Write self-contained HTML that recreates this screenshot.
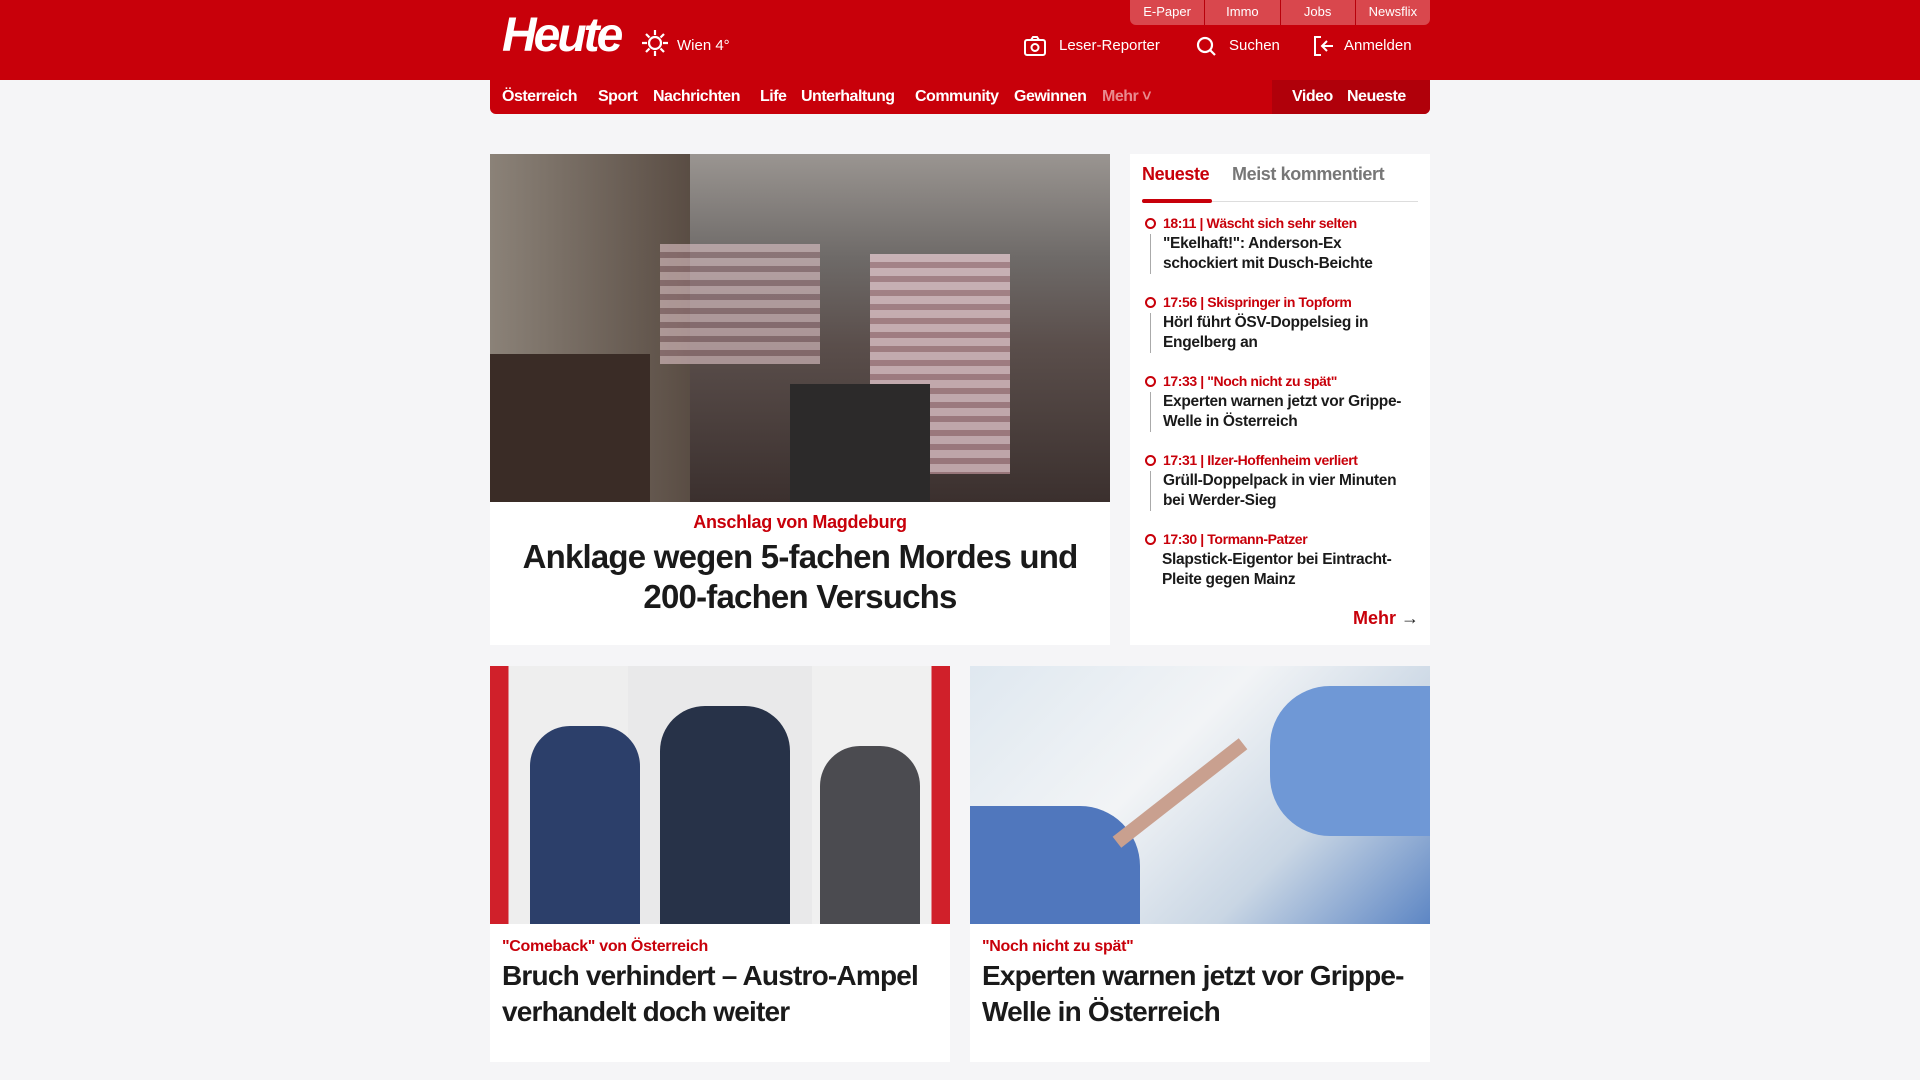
<!DOCTYPE html>
<html><head><meta charset="utf-8"><style>
*{margin:0;padding:0;box-sizing:border-box}
body{width:1920px;height:1080px;background:#f5f5f7;font-family:"Liberation Sans",sans-serif;overflow:hidden;position:relative}
.hdr{position:absolute;left:0;top:0;width:1920px;height:80px;background:#c8000a}
.abs{position:absolute}
.w{color:#fff}
.logo{left:502px;top:10px;font:italic bold 48px/52px "Liberation Sans",sans-serif;color:#fff;letter-spacing:-3px}
.tabs{left:1130px;top:0;width:300px;height:25px;display:flex;background:#d9474d;border-radius:0 0 6px 6px;overflow:hidden}
.tabs div{flex:1;color:#fff;font-size:13px;text-align:center;line-height:24px;border-right:1px solid #b8000a}
.tabs div:last-child{border:0}
.nav{left:490px;top:80px;width:940px;height:34px;background:#c8000a;border-radius:0 0 6px 6px}
.nav span{position:absolute;top:8px;color:#fff;font-weight:bold;font-size:16px;letter-spacing:-.5px}
.card{position:absolute;background:#fff}
.kick{color:#c8000a;font-weight:bold}
.hl{color:#1a1a1a;font-weight:bold;letter-spacing:-.8px}
.item{position:absolute;left:1145px;width:272px}
.item .t{color:#c8000a;font-weight:bold;font-size:14px;letter-spacing:-.4px;padding-left:18px;position:relative}
.item .t:before{content:"";position:absolute;left:0;top:3px;width:7px;height:7px;border:2px solid #c8000a;border-radius:50%}
.item .h{font-weight:bold;font-size:15.5px;line-height:20px;color:#1a1a1a;margin-top:3px;letter-spacing:-.3px;border-left:1px solid #aaa;margin-left:5px;padding-left:12px}
</style></head><body>
<div class="hdr"></div>
<div class="abs logo">Heute</div>
<svg class="abs" style="left:640px;top:28px" width="30" height="30" viewBox="0 0 30 30" fill="none" stroke="#fff" stroke-width="2.2"><circle cx="15" cy="15" r="6"/><path d="M15 2v5M15 23v5M2 15h5M23 15h5M6 6l3.5 3.5M20.5 20.5L24 24M24 6l-3.5 3.5M9.5 20.5L6 24"/></svg>
<div class="abs w" style="left:677px;top:37px;font-size:15px">Wien 4°</div>
<div class="abs tabs"><div>E-Paper</div><div>Immo</div><div>Jobs</div><div>Newsflix</div></div>
<svg class="abs" style="left:1024px;top:36px" width="22" height="20" viewBox="0 0 22 20" fill="none" stroke="#fff" stroke-width="2"><rect x="1" y="4" width="20" height="15" rx="2"/><path d="M7 4l2-3h4l2 3"/><circle cx="11" cy="11.5" r="3.5"/></svg>
<div class="abs w" style="left:1059px;top:37px;font-size:15px">Leser-Reporter</div>
<svg class="abs" style="left:1196px;top:36px" width="21" height="21" viewBox="0 0 21 21" fill="none" stroke="#fff" stroke-width="2.2"><circle cx="9" cy="9" r="7"/><path d="M14 14l5 5"/></svg>
<div class="abs w" style="left:1229px;top:37px;font-size:15px">Suchen</div>
<svg class="abs" style="left:1313px;top:35px" width="22" height="22" viewBox="0 0 22 22" fill="none" stroke="#fff" stroke-width="2"><path d="M8 2H2v18h6M9 11h11M14 6l-5 5 5 5"/></svg>
<div class="abs w" style="left:1344px;top:37px;font-size:15px">Anmelden</div>
<div class="abs nav">
<span style="left:12px">Österreich</span><span style="left:108px">Sport</span><span style="left:163px">Nachrichten</span><span style="left:270px">Life</span><span style="left:311px">Unterhaltung</span><span style="left:425px">Community</span><span style="left:524px">Gewinnen</span><span style="left:612px;color:#e98a8f">Mehr ˅</span>
<div style="position:absolute;right:0;top:0;width:158px;height:34px;background:#b0000a;border-radius:0 0 6px 0"></div>
<span style="left:802px">Video</span><span style="left:857px">Neueste</span>
</div>

<div class="card" style="left:490px;top:154px;width:620px;height:491px">
<div style="height:348px;background:linear-gradient(180deg,#9a9591 0%,#6e6a68 30%,#5a4e4b 55%,#3b302e 100%);position:relative;overflow:hidden">
<div style="position:absolute;left:0;top:0;width:200px;height:348px;background:linear-gradient(90deg,#8b8278,#5a4d44)"></div>
<div style="position:absolute;left:0;top:200px;width:160px;height:148px;background:#3a2c26"></div>
<div style="position:absolute;left:380px;top:100px;width:140px;height:220px;background:repeating-linear-gradient(180deg,#e6c9cf 0 8px,#b58b92 8px 14px);opacity:.75"></div>
<div style="position:absolute;left:170px;top:90px;width:160px;height:120px;background:repeating-linear-gradient(180deg,#e0c4c8 0 8px,#9d7a80 8px 14px);opacity:.6"></div>
<div style="position:absolute;left:300px;top:230px;width:140px;height:118px;background:#2c2a2a"></div>
</div>
<div class="kick" style="text-align:center;font-size:18px;margin-top:10px;letter-spacing:-.3px">Anschlag von Magdeburg</div>
<div class="hl" style="text-align:center;font-size:33px;line-height:40px;margin-top:4px">Anklage wegen 5-fachen Mordes und<br>200-fachen Versuchs</div>
</div>

<div class="card" style="left:1130px;top:154px;width:300px;height:491px">
<div class="abs" style="left:12px;top:10px;color:#c8000a;font-weight:bold;font-size:18px;letter-spacing:-.4px">Neueste</div>
<div class="abs" style="left:102px;top:10px;color:#777;font-weight:bold;font-size:18px;letter-spacing:-.4px">Meist kommentiert</div>
<div class="abs" style="left:12px;top:47px;width:276px;height:1px;background:#ddd"></div>
<div class="abs" style="left:12px;top:45px;width:70px;height:4px;background:#c8000a;border-radius:2px"></div>
</div>
<div class="item" style="top:215px"><div class="t">18:11 | Wäscht sich sehr selten</div><div class="h">"Ekelhaft!": Anderson-Ex schockiert mit Dusch-Beichte</div></div>
<div class="item" style="top:294px"><div class="t">17:56 | Skispringer in Topform</div><div class="h">Hörl führt ÖSV-Doppelsieg in Engelberg an</div></div>
<div class="item" style="top:373px"><div class="t">17:33 | "Noch nicht zu spät"</div><div class="h">Experten warnen jetzt vor Grippe-Welle in Österreich</div></div>
<div class="item" style="top:452px"><div class="t">17:31 | Ilzer-Hoffenheim verliert</div><div class="h">Grüll-Doppelpack in vier Minuten bei Werder-Sieg</div></div>
<div class="item" style="top:531px"><div class="t">17:30 | Tormann-Patzer</div><div class="h" style="border:0">Slapstick-Eigentor bei Eintracht-Pleite gegen Mainz</div></div>
<div class="abs" style="left:1353px;top:608px;color:#c8000a;font-weight:bold;font-size:18px">Mehr <span style="color:#222">→</span></div>

<div class="card" style="left:490px;top:666px;width:460px;height:396px">
<div style="height:258px;background:linear-gradient(90deg,#d0202a 0 4%,#eee 4% 30%,#e9e9ea 30% 70%,#f0f0f0 70% 96%,#d0202a 96%);position:relative">
<div style="position:absolute;left:40px;top:60px;width:110px;height:198px;background:#2c3f6a;border-radius:40px 40px 0 0"></div>
<div style="position:absolute;left:170px;top:40px;width:130px;height:218px;background:#273248;border-radius:45px 45px 0 0"></div>
<div style="position:absolute;left:330px;top:80px;width:100px;height:178px;background:#4b4b50;border-radius:40px 40px 0 0"></div>
</div>
<div class="kick" style="padding-left:12px;font-size:16px;margin-top:14px;letter-spacing:-.3px">"Comeback" von Österreich</div>
<div class="hl" style="padding-left:12px;font-size:28px;line-height:36px;margin-top:2px">Bruch verhindert – Austro-Ampel verhandelt doch weiter</div>
</div>
<div class="card" style="left:970px;top:666px;width:460px;height:396px">
<div style="height:258px;background:linear-gradient(135deg,#dfe8f0 0%,#f2f4f6 40%,#c9d6e4 70%,#5d86c4 100%);position:relative;overflow:hidden">
<div style="position:absolute;left:0;top:140px;width:170px;height:118px;background:#5077bd;border-radius:0 60px 0 0"></div>
<div style="position:absolute;left:300px;top:20px;width:160px;height:150px;background:#6f98d6;border-radius:60px 0 0 60px"></div>
<div style="position:absolute;left:130px;top:120px;width:160px;height:14px;background:#c9a08f;transform:rotate(-38deg)"></div>
</div>
<div class="kick" style="padding-left:12px;font-size:16px;margin-top:14px;letter-spacing:-.3px">"Noch nicht zu spät"</div>
<div class="hl" style="padding-left:12px;font-size:28px;line-height:36px;margin-top:2px">Experten warnen jetzt vor Grippe-Welle in Österreich</div>
</div>
</body></html>
